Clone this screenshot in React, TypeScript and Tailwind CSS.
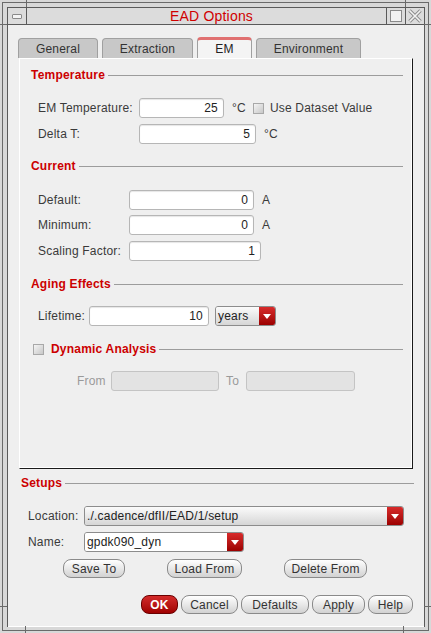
import React from "react";

const labelCls = "text-[12px] text-[#3a3a3a] leading-none";

function Heading({ text }: { text: string }) {
  return (
    <div className="flex h-[16px] items-center">
      <span className="text-[12px] font-bold leading-none text-[#cc0000]">{text}</span>
      <div className="ml-[3px] h-px flex-1 bg-[#9c9c9c]" />
    </div>
  );
}

function Field({ value, w, disabled }: { value?: string; w: string; disabled?: boolean }) {
  return (
    <div
      className={`flex h-[20px] ${w} items-center justify-end rounded-[3px] border pr-[5px] text-[12px] leading-none text-[#222] ${
        disabled
          ? "border-[#c4c4c4] bg-[#e3e3e3]"
          : "border-[#b6b6b6] bg-white shadow-[inset_0_1px_1px_rgba(0,0,0,0.1)]"
      }`}
    >
      {value}
    </div>
  );
}

function Check() {
  return (
    <div className="h-[11px] w-[11px] border border-[#a8a8a8] bg-gradient-to-br from-[#f4f4f4] to-[#c8c8c8]" />
  );
}

function Combo({ text, w, editable }: { text: string; w: string; editable?: boolean }) {
  return (
    <div className={`flex h-[20px] ${w} overflow-hidden rounded-[3px] border border-[#8c8c8c]`}>
      <div
        className={`flex flex-1 items-center pl-[2px] text-[12px] leading-none text-[#222] ${
          editable ? "bg-white" : "bg-gradient-to-b from-[#fbfbfb] to-[#d6d6d6]"
        }`}
      >
        {text}
      </div>
      <div className="flex w-[16px] items-center justify-center bg-gradient-to-b from-[#d82a2a] to-[#9c0000]">
        <svg width="8" height="5" viewBox="0 0 8 5">
          <path d="M0 0h8L4 5z" fill="#fff" />
        </svg>
      </div>
    </div>
  );
}

function Btn({ label, w, primary }: { label: string; w: string; primary?: boolean }) {
  return (
    <div
      className={`flex h-[19px] ${w} items-center justify-center rounded-[8px] border text-[12px] leading-none ${
        primary
          ? "border-[#6a0000] bg-gradient-to-b from-[#d42a2a] to-[#a00000] font-bold text-white"
          : "border-[#8a8a8a] bg-gradient-to-b from-white to-[#d2d2d2] text-[#333]"
      }`}
    >
      {label}
    </div>
  );
}

const tabs = [
  { name: "General", w: "w-[80px]" },
  { name: "Extraction", w: "w-[91px]" },
  { name: "EM", w: "w-[55px]", active: true },
  { name: "Environment", w: "w-[105px]" },
];

export default function App() {
  return (
    <div className="relative h-[633px] w-[431px] overflow-hidden bg-[#d8d8d8] p-[2px] font-['Liberation_Sans',Arial,sans-serif] tracking-[0.2px]">
      {/* frame ticks */}
      <div className="absolute left-[26px] top-0 h-[7px] w-px bg-[#6a6a6a]" />
      <div className="absolute left-[405px] top-0 h-[7px] w-px bg-[#6a6a6a]" />
      <div className="absolute left-0 top-[24px] h-px w-[7px] bg-[#6a6a6a]" />
      <div className="absolute right-0 top-[24px] h-px w-[7px] bg-[#6a6a6a]" />
      <div className="absolute left-0 top-[606px] h-px w-[7px] bg-[#6a6a6a]" />
      <div className="absolute right-0 top-[606px] h-px w-[7px] bg-[#6a6a6a]" />
      <div className="absolute bottom-0 left-[25px] h-[7px] w-px bg-[#6a6a6a]" />
      <div className="absolute bottom-0 left-[403px] h-[7px] w-px bg-[#6a6a6a]" />

      <div className="h-full border border-[#6a6a6a] pb-[3px] pl-[4px] pr-[3px] pt-[4px]">
        <div className="flex h-full flex-col border-l border-r border-t border-[#5a5a5a]">
          {/* title bar */}
          <div className="flex h-[17px] shrink-0 border-b border-[#5a5a5a] bg-[#dcdcdc]">
            <div className="flex w-[19px] items-center justify-center border-r border-[#5a5a5a]">
              <div className="h-[5px] w-[10px] rounded-[1px] border border-[#8a8a8a] bg-[#f4f4f4]" />
            </div>
            <div className="flex flex-1 items-center justify-center pl-[10px] text-[14px] leading-none text-[#d00000]">
              EAD Options
            </div>
            <div className="flex w-[19px] items-center justify-center border-l border-[#5a5a5a]">
              <div className="h-[12px] w-[12px] border border-[#8a8a8a] bg-[#f2f2f2]" />
            </div>
            <div className="flex w-[19px] items-center justify-center border-l border-[#5a5a5a]">
              <svg width="14" height="14" viewBox="0 0 14 14">
                <path d="M1.5 1.5l11 11M12.5 1.5l-11 11" stroke="#8a8a8a" strokeWidth="3.4" />
                <path d="M1.5 1.5l11 11M12.5 1.5l-11 11" stroke="#f2f2f2" strokeWidth="1.6" />
              </svg>
            </div>
          </div>

          {/* content */}
          <div className="flex flex-1 flex-col bg-[#efefef] shadow-[inset_0_-1px_0_#ffffff]">
            {/* tabs */}
            <div className="ml-[10px] mt-[12px] flex h-[21px] items-end gap-[4px]">
              {tabs.map((t) =>
                t.active ? (
                  <div
                    key={t.name}
                    className={`flex h-[21px] ${t.w} items-center justify-center rounded-t-[4px] border-l border-r border-t-[3px] border-l-[#a0a0a0] border-r-[#a0a0a0] border-t-[#e07070] bg-[#f4f4f4] pb-[1px] text-[12px] leading-none text-[#222]`}
                  >
                    {t.name}
                  </div>
                ) : (
                  <div
                    key={t.name}
                    className={`flex h-[20px] ${t.w} items-center justify-center rounded-t-[4px] border-l border-r border-t border-[#a0a0a0] bg-[#c8c8c8] text-[12px] leading-none text-[#333]`}
                  >
                    {t.name}
                  </div>
                )
              )}
            </div>

            {/* EM panel */}
            <div className="ml-[11px] flex h-[411px] w-[394px] flex-col border border-b-[#1a1a1a] border-l-white border-r-[#1a1a1a] border-t-white pl-[11px] pr-[9px] shadow-[inset_-1px_-1px_0_#ffffff]">
              <div className="mt-[8px]">
                <Heading text="Temperature" />
              </div>
              <div className="mt-[15px] flex h-[20px] items-center pl-[7px]">
                <span className={`${labelCls} w-[101px]`}>EM Temperature:</span>
                <Field value="25" w="w-[85px]" />
                <span className={`${labelCls} ml-[8px]`}>°C</span>
                <div className="ml-[7px]">
                  <Check />
                </div>
                <span className={`${labelCls} ml-[6px]`}>Use Dataset Value</span>
              </div>
              <div className="mt-[6px] flex h-[20px] items-center pl-[7px]">
                <span className={`${labelCls} w-[101px]`}>Delta T:</span>
                <Field value="5" w="w-[117px]" />
                <span className={`${labelCls} ml-[8px]`}>°C</span>
              </div>

              <div className="mt-[14px]">
                <Heading text="Current" />
              </div>
              <div className="mt-[16px] flex h-[20px] items-center pl-[7px]">
                <span className={`${labelCls} w-[91px]`}>Default:</span>
                <Field value="0" w="w-[125px]" />
                <span className={`${labelCls} ml-[8px]`}>A</span>
              </div>
              <div className="mt-[5px] flex h-[20px] items-center pl-[7px]">
                <span className={`${labelCls} w-[91px]`}>Minimum:</span>
                <Field value="0" w="w-[125px]" />
                <span className={`${labelCls} ml-[8px]`}>A</span>
              </div>
              <div className="mt-[6px] flex h-[20px] items-center pl-[7px]">
                <span className={`${labelCls} w-[91px]`}>Scaling Factor:</span>
                <Field value="1" w="w-[132px]" />
              </div>

              <div className="mt-[15px]">
                <Heading text="Aging Effects" />
              </div>
              <div className="mt-[14px] flex h-[20px] items-center pl-[7px]">
                <span className={`${labelCls} w-[51px]`}>Lifetime:</span>
                <Field value="10" w="w-[120px]" />
                <div className="ml-[6px]">
                  <Combo text="years" w="w-[61px]" />
                </div>
              </div>

              <div className="mt-[15px] flex h-[16px] items-center">
                <div className="ml-[2px]">
                  <Check />
                </div>
                <span className="ml-[7px] text-[12px] font-bold leading-none text-[#cc0000]">Dynamic Analysis</span>
                <div className="ml-[3px] h-px flex-1 bg-[#9c9c9c]" />
              </div>
              <div className="mt-[14px] flex h-[20px] items-center pl-[46px]">
                <span className="w-[34px] text-[12px] leading-none text-[#9a9a9a]">From</span>
                <Field w="w-[108px]" disabled />
                <span className="ml-[7px] w-[20px] text-[12px] leading-none text-[#9a9a9a]">To</span>
                <Field w="w-[109px]" disabled />
              </div>
            </div>

            {/* Setups */}
            <div className="mt-[6px] pl-[13px] pr-[10px]">
              <Heading text="Setups" />
            </div>
            <div className="mt-[15px] flex h-[20px] items-center pl-[20px]">
              <span className={`${labelCls} w-[56px]`}>Location:</span>
              <Combo text="./.cadence/dfII/EAD/1/setup" w="w-[320px]" />
            </div>
            <div className="mt-[6px] flex h-[20px] items-center pl-[20px]">
              <span className={`${labelCls} w-[56px]`}>Name:</span>
              <Combo text="gpdk090_dyn" w="w-[160px]" editable />
            </div>
            <div className="mt-[7px] flex items-center gap-[42px] pl-[55px]">
              <Btn label="Save To" w="w-[62px]" />
              <Btn label="Load From" w="w-[75px]" />
              <Btn label="Delete From" w="w-[83px]" />
            </div>
            <div className="mt-[17px] flex items-center justify-end gap-[3px] pr-[11px]">
              <Btn label="OK" w="w-[37px]" primary />
              <Btn label="Cancel" w="w-[57px]" />
              <Btn label="Defaults" w="w-[68px]" />
              <Btn label="Apply" w="w-[53px]" />
              <Btn label="Help" w="w-[45px]" />
            </div>
          </div>
        </div>
      </div>
    </div>
  );
}
